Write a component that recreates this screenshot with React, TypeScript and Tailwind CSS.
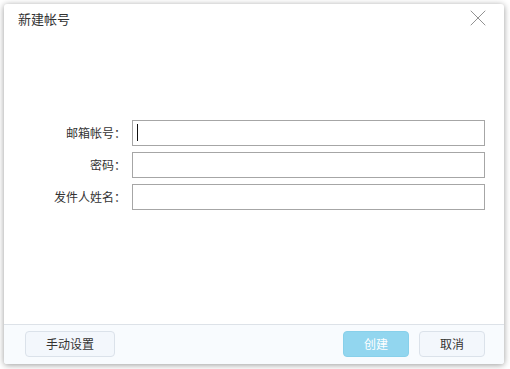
import { X } from "lucide-react";

const fields = ["邮箱帐号：", "密码：", "发件人姓名："];

export default function App() {
  return (
    <div
      className="w-[510px] h-[369px] bg-white pt-[4px] pl-[4px]"
      style={{ fontFamily: '"Microsoft YaHei", "Noto Sans CJK SC", "Noto Sans", sans-serif' }}
    >
      <div className="w-[500px] h-[360px] bg-white rounded-[3px] shadow-[0_1px_6px_rgba(0,0,0,0.4)] flex flex-col relative">
        {/* 标题 */}
        <div className="h-[30px] flex items-center pl-[14px] text-[13px] text-[#333]">
          新建帐号
        </div>
        <button className="absolute right-[12px] top-[0px] text-[#8a8a8a]">
          <X className="w-[28px] h-[28px]" strokeWidth={0.8} />
        </button>

        {/* 表单 */}
        <div className="flex-1 pt-[86px] flex flex-col gap-[6px]">
          {fields.map((label, i) => (
            <div key={label} className="flex items-center">
              <label className="w-[122px] text-right text-[12px] text-[#333]">
                {label}
              </label>
              <div className="ml-[6px] w-[353px] h-[26px] border border-[#a6a6a6] bg-white relative">
                {i === 0 && (
                  <div className="absolute left-[4px] top-[3px] w-[1px] h-[17px] bg-[#111]" />
                )}
              </div>
            </div>
          ))}
        </div>

        {/* 底部按钮 */}
        <div className="h-[40px] border-t border-[#dde2e8] bg-[#f8fbfe] rounded-b-[3px] flex items-center pl-[21px] pr-[19px] pb-[1px]">
          <button className="w-[90px] h-[26px] rounded-[4px] border border-[#dbe2ea] bg-[#f3f7fc] text-[12px] text-[#333]">
            手动设置
          </button>
          <div className="flex-1" />
          <button className="w-[66px] h-[26px] rounded-[4px] border border-[#88d0ea] bg-[#92d6ef] text-[12px] text-white">
            创建
          </button>
          <button className="ml-[10px] w-[66px] h-[26px] rounded-[4px] border border-[#dbe2ea] bg-[#f3f7fc] text-[12px] text-[#333]">
            取消
          </button>
        </div>
      </div>
    </div>
  );
}
